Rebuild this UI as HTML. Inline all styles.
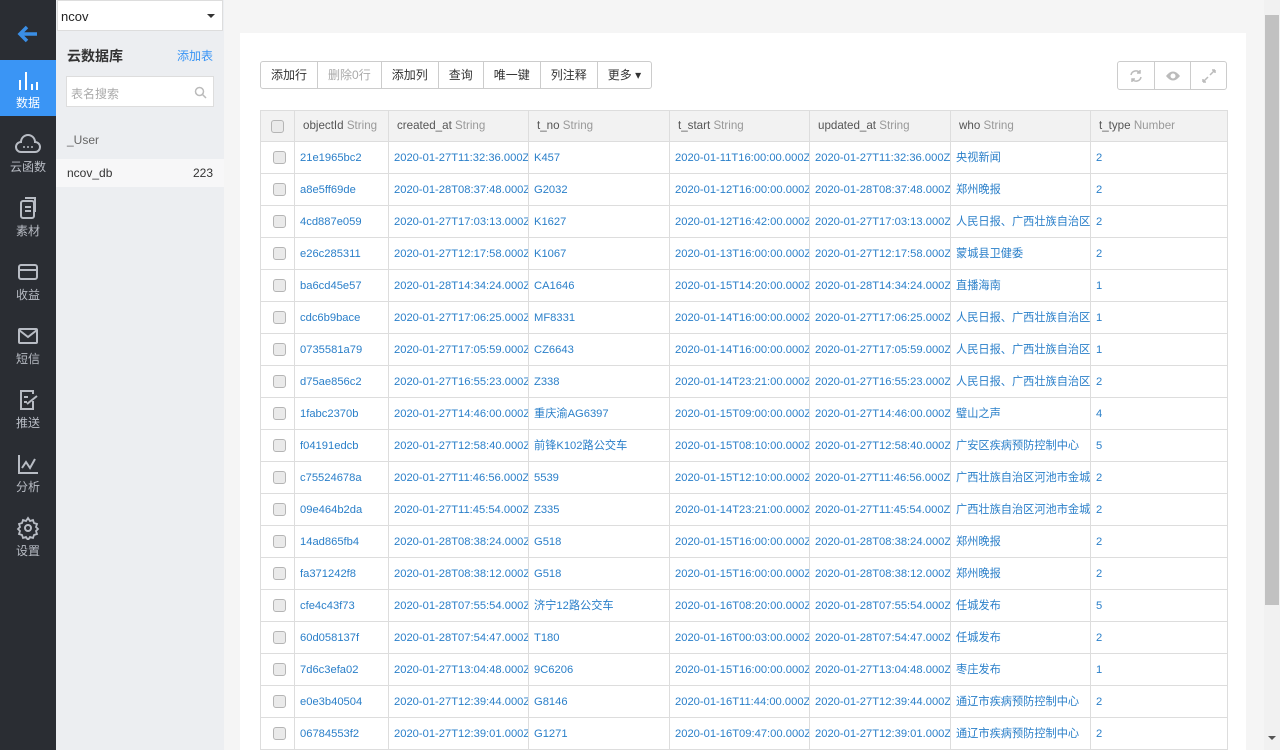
<!DOCTYPE html>
<html><head><meta charset="utf-8"><style>
*{box-sizing:border-box;margin:0;padding:0}
body{width:1280px;height:750px;overflow:hidden;background:#f5f5f5;font-family:"Liberation Sans","Noto Sans CJK SC",sans-serif;font-size:12px;color:#333;position:relative}
.nav{position:absolute;left:0;top:0;width:56px;height:750px;background:#2a2d33}
.nav .it{position:absolute;left:0;width:56px;height:56px;text-align:center;color:#b8bcc4;font-size:12px}
.nav .it svg{display:block;margin:8px auto 2px}
.nav .act{background:#3a95f5;color:#fff}
.side{position:absolute;left:56px;top:0;width:168px;height:750px;background:#eceef1}
.sel{position:absolute;left:1px;top:0;width:166px;height:31px;background:#fff;border:1px solid #ddd;font-size:13px;padding:8px 3px;color:#222}
.sel:after{content:"";position:absolute;right:7px;top:13px;border:4px solid transparent;border-top:4px solid #333}
.title{position:absolute;left:11px;top:46px;font-size:14px;font-weight:bold;color:#333}
.add{position:absolute;right:11px;top:47px;color:#3a95f5;font-size:12px}
.search{position:absolute;left:10px;top:76px;width:148px;height:31px;background:#fff;border:1px solid #ddd;color:#aaa;padding:8px 4px;font-size:12px}
.tb{position:absolute;left:0;width:168px;height:28px;padding:7px 11px;font-size:12px}
.main{position:absolute;left:240px;top:33px;width:1006px;height:717px;background:#fff}
.btns{position:absolute;left:260px;top:61px;height:28px;display:flex;border:1px solid #ccc;border-radius:3px;background:#fff}
.btns div{padding:0 10px;line-height:26px;border-left:1px solid #ccc;color:#333}
.btns div:first-child{border-left:none}
.ib{position:absolute;left:1117px;top:61px;height:29px;display:flex;border:1px solid #ccc;border-radius:3px}
.ib div{width:36px;height:27px;border-left:1px solid #ccc;display:flex;align-items:center;justify-content:center}
.ib div:first-child{border-left:none}
table{position:absolute;left:260px;top:110px;border-collapse:collapse;table-layout:fixed;width:967px}
td,th{border:1px solid #ddd;height:32px;line-height:14px;vertical-align:middle;padding:0 1px 0 5px;white-space:nowrap;overflow:hidden;font-weight:normal;text-align:left;color:#2a7fc9;font-size:11.2px}
th{background:#f2f2f2;color:#555;height:31px;padding:0 8px;font-size:11.6px}
th span{color:#999}
.cb{width:13px;height:13px;border:1px solid #b5b5b5;border-radius:3px;background:#eaeaea;margin:auto}
.sb{position:absolute;left:1264px;top:0;width:16px;height:750px;background:#f1f1f1}
.sb .th{position:absolute;left:1px;top:15px;width:14px;height:590px;background:#c1c1c1}
</style></head><body>
<div class="nav">
<div class="it" style="top:8px;height:50px"><svg width="24" height="24" viewBox="0 0 24 24" style="margin-top:14px"><path d="M21 12H5M11 5l-7 7 7 7" stroke="#3a8ee6" stroke-width="3.5" fill="none"/></svg></div>
<div class="it act" style="top:60px"><svg width="22" height="24" viewBox="0 0 22 24"><path d="M3 12v10M9 4v18M15 16v6M20 14v8" stroke="#fff" stroke-width="2"/></svg>数据</div>
<div class="it" style="top:124px"><svg width="26" height="24" viewBox="0 0 26 24"><path d="M6 20a5 5 0 0 1 0-10 7 7 0 0 1 14 0 5 5 0 0 1 0 10z" stroke="#b8bcc4" stroke-width="2" fill="none"/><circle cx="9" cy="15" r="1" fill="#b8bcc4"/><circle cx="13" cy="15" r="1" fill="#b8bcc4"/><circle cx="17" cy="15" r="1" fill="#b8bcc4"/></svg>云函数</div>
<div class="it" style="top:188px"><svg width="22" height="24" viewBox="0 0 22 24"><rect x="4" y="5" width="13" height="17" rx="2" stroke="#b8bcc4" stroke-width="2" fill="none"/><path d="M8 2h10v14M8 11h6M8 15h6" stroke="#b8bcc4" stroke-width="2" fill="none"/></svg>素材</div>
<div class="it" style="top:252px"><svg width="24" height="24" viewBox="0 0 24 24"><rect x="3" y="5" width="18" height="14" rx="2" stroke="#b8bcc4" stroke-width="2" fill="none"/><path d="M3 10h18" stroke="#b8bcc4" stroke-width="2"/></svg>收益</div>
<div class="it" style="top:316px"><svg width="24" height="24" viewBox="0 0 24 24"><rect x="3" y="5" width="18" height="14" rx="1" stroke="#b8bcc4" stroke-width="2" fill="none"/><path d="M3 6l9 7 9-7" stroke="#b8bcc4" stroke-width="2" fill="none"/></svg>短信</div>
<div class="it" style="top:380px"><svg width="24" height="24" viewBox="0 0 24 24"><path d="M17 13v8H5V3h12v3M8 9h4M8 14h3M11 16l10-8" stroke="#b8bcc4" stroke-width="2" fill="none"/></svg>推送</div>
<div class="it" style="top:444px"><svg width="24" height="24" viewBox="0 0 24 24"><path d="M3 3v18h19M6 16l4-6 4 6 5-9" stroke="#b8bcc4" stroke-width="2" fill="none"/></svg>分析</div>
<div class="it" style="top:508px"><svg width="24" height="24" viewBox="0 0 24 24"><circle cx="12" cy="12" r="3" stroke="#b8bcc4" stroke-width="2" fill="none"/><path d="M12 2l2 3 3-1 1 3 3 1-1 3 2 2-2 2 1 3-3 1-1 3-3-1-2 3-2-3-3 1-1-3-3-1 1-3-2-2 2-2-1-3 3-1 1-3 3 1z" stroke="#b8bcc4" stroke-width="1.8" fill="none"/></svg>设置</div>
</div>
<div class="side">
<div class="sel">ncov</div>
<div class="title">云数据库</div><div class="add">添加表</div>
<div class="search">表名搜索<svg style="position:absolute;right:6px;top:9px" width="13" height="13" viewBox="0 0 13 13"><circle cx="5.5" cy="5.5" r="4" stroke="#bbb" stroke-width="1.5" fill="none"/><path d="M8.5 8.5l3.5 3.5" stroke="#bbb" stroke-width="1.5"/></svg></div>
<div class="tb" style="top:126px;color:#666">_User</div>
<div class="tb" style="top:159px;background:#f7f7f8;height:28px;color:#333">ncov_db<span style="float:right">223</span></div>
</div>
<div class="main"></div>
<div class="btns"><div>添加行</div><div style="color:#aaa">删除0行</div><div>添加列</div><div>查询</div><div>唯一键</div><div>列注释</div><div>更多 ▾</div></div>
<div class="ib"><div><svg width="14" height="14" viewBox="0 0 14 14"><path d="M2 6a5 5 0 0 1 9-2M12 8a5 5 0 0 1-9 2M11 1v3H8M3 13v-3h3" stroke="#bbb" stroke-width="1.5" fill="none"/></svg></div><div><svg width="16" height="12" viewBox="0 0 16 12"><path d="M1 6q7-9 14 0-7 9-14 0z" fill="#bbb"/><circle cx="8" cy="6" r="2.5" fill="#fff"/></svg></div><div><svg width="14" height="14" viewBox="0 0 14 14"><path d="M8 6l5-5M13 1h-3M13 1v3M6 8l-5 5M1 13h3M1 13v-3" stroke="#bbb" stroke-width="1.5"/></svg></div></div>
<table>
<colgroup><col style="width:34px"><col style="width:94px"><col style="width:140px"><col style="width:141px"><col style="width:140px"><col style="width:141px"><col style="width:140px"><col style="width:137px"></colgroup>
<tr><th style="padding:0"><div class="cb"></div></th><th>objectId <span>String</span></th><th>created_at <span>String</span></th><th>t_no <span>String</span></th><th>t_start <span>String</span></th><th>updated_at <span>String</span></th><th>who <span>String</span></th><th>t_type <span>Number</span></th></tr>
<tr><td><div class="cb"></div></td><td>21e1965bc2</td><td>2020-01-27T11:32:36.000Z</td><td>K457</td><td>2020-01-11T16:00:00.000Z</td><td>2020-01-27T11:32:36.000Z</td><td>央视新闻</td><td>2</td></tr>
<tr><td><div class="cb"></div></td><td>a8e5ff69de</td><td>2020-01-28T08:37:48.000Z</td><td>G2032</td><td>2020-01-12T16:00:00.000Z</td><td>2020-01-28T08:37:48.000Z</td><td>郑州晚报</td><td>2</td></tr>
<tr><td><div class="cb"></div></td><td>4cd887e059</td><td>2020-01-27T17:03:13.000Z</td><td>K1627</td><td>2020-01-12T16:42:00.000Z</td><td>2020-01-27T17:03:13.000Z</td><td>人民日报、广西壮族自治区</td><td>2</td></tr>
<tr><td><div class="cb"></div></td><td>e26c285311</td><td>2020-01-27T12:17:58.000Z</td><td>K1067</td><td>2020-01-13T16:00:00.000Z</td><td>2020-01-27T12:17:58.000Z</td><td>蒙城县卫健委</td><td>2</td></tr>
<tr><td><div class="cb"></div></td><td>ba6cd45e57</td><td>2020-01-28T14:34:24.000Z</td><td>CA1646</td><td>2020-01-15T14:20:00.000Z</td><td>2020-01-28T14:34:24.000Z</td><td>直播海南</td><td>1</td></tr>
<tr><td><div class="cb"></div></td><td>cdc6b9bace</td><td>2020-01-27T17:06:25.000Z</td><td>MF8331</td><td>2020-01-14T16:00:00.000Z</td><td>2020-01-27T17:06:25.000Z</td><td>人民日报、广西壮族自治区</td><td>1</td></tr>
<tr><td><div class="cb"></div></td><td>0735581a79</td><td>2020-01-27T17:05:59.000Z</td><td>CZ6643</td><td>2020-01-14T16:00:00.000Z</td><td>2020-01-27T17:05:59.000Z</td><td>人民日报、广西壮族自治区</td><td>1</td></tr>
<tr><td><div class="cb"></div></td><td>d75ae856c2</td><td>2020-01-27T16:55:23.000Z</td><td>Z338</td><td>2020-01-14T23:21:00.000Z</td><td>2020-01-27T16:55:23.000Z</td><td>人民日报、广西壮族自治区</td><td>2</td></tr>
<tr><td><div class="cb"></div></td><td>1fabc2370b</td><td>2020-01-27T14:46:00.000Z</td><td>重庆渝AG6397</td><td>2020-01-15T09:00:00.000Z</td><td>2020-01-27T14:46:00.000Z</td><td>璧山之声</td><td>4</td></tr>
<tr><td><div class="cb"></div></td><td>f04191edcb</td><td>2020-01-27T12:58:40.000Z</td><td>前锋K102路公交车</td><td>2020-01-15T08:10:00.000Z</td><td>2020-01-27T12:58:40.000Z</td><td>广安区疾病预防控制中心</td><td>5</td></tr>
<tr><td><div class="cb"></div></td><td>c75524678a</td><td>2020-01-27T11:46:56.000Z</td><td>5539</td><td>2020-01-15T12:10:00.000Z</td><td>2020-01-27T11:46:56.000Z</td><td>广西壮族自治区河池市金城</td><td>2</td></tr>
<tr><td><div class="cb"></div></td><td>09e464b2da</td><td>2020-01-27T11:45:54.000Z</td><td>Z335</td><td>2020-01-14T23:21:00.000Z</td><td>2020-01-27T11:45:54.000Z</td><td>广西壮族自治区河池市金城</td><td>2</td></tr>
<tr><td><div class="cb"></div></td><td>14ad865fb4</td><td>2020-01-28T08:38:24.000Z</td><td>G518</td><td>2020-01-15T16:00:00.000Z</td><td>2020-01-28T08:38:24.000Z</td><td>郑州晚报</td><td>2</td></tr>
<tr><td><div class="cb"></div></td><td>fa371242f8</td><td>2020-01-28T08:38:12.000Z</td><td>G518</td><td>2020-01-15T16:00:00.000Z</td><td>2020-01-28T08:38:12.000Z</td><td>郑州晚报</td><td>2</td></tr>
<tr><td><div class="cb"></div></td><td>cfe4c43f73</td><td>2020-01-28T07:55:54.000Z</td><td>济宁12路公交车</td><td>2020-01-16T08:20:00.000Z</td><td>2020-01-28T07:55:54.000Z</td><td>任城发布</td><td>5</td></tr>
<tr><td><div class="cb"></div></td><td>60d058137f</td><td>2020-01-28T07:54:47.000Z</td><td>T180</td><td>2020-01-16T00:03:00.000Z</td><td>2020-01-28T07:54:47.000Z</td><td>任城发布</td><td>2</td></tr>
<tr><td><div class="cb"></div></td><td>7d6c3efa02</td><td>2020-01-27T13:04:48.000Z</td><td>9C6206</td><td>2020-01-15T16:00:00.000Z</td><td>2020-01-27T13:04:48.000Z</td><td>枣庄发布</td><td>1</td></tr>
<tr><td><div class="cb"></div></td><td>e0e3b40504</td><td>2020-01-27T12:39:44.000Z</td><td>G8146</td><td>2020-01-16T11:44:00.000Z</td><td>2020-01-27T12:39:44.000Z</td><td>通辽市疾病预防控制中心</td><td>2</td></tr>
<tr><td><div class="cb"></div></td><td>06784553f2</td><td>2020-01-27T12:39:01.000Z</td><td>G1271</td><td>2020-01-16T09:47:00.000Z</td><td>2020-01-27T12:39:01.000Z</td><td>通辽市疾病预防控制中心</td><td>2</td></tr>
</table>
<div class="sb"><div class="th"></div><div style="position:absolute;left:4px;bottom:6px;border:4px solid transparent;border-top:4px solid #555"></div></div>
</body></html>
